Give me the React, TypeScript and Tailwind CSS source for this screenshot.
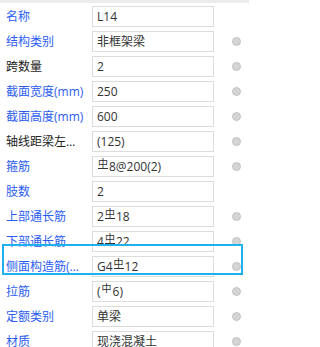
const rows: { label: string; value: React.ReactNode; blue: boolean; dot: boolean }[] = [];

function Grade3() {
  // HRB400 rebar grade mark
  return (
    <span className="inline-block align-text-top text-[10px] leading-[10px] border-b border-[#333] mx-[1px]">
      中
    </span>
  );
}

function Grade1() {
  // HPB300 rebar grade mark
  return <span className="inline-block align-text-top text-[10px] leading-[10px] mx-[1px]">中</span>;
}

rows.push(
  { label: "名称", value: "L14", blue: true, dot: false },
  { label: "结构类别", value: "非框架梁", blue: true, dot: true },
  { label: "跨数量", value: "2", blue: false, dot: true },
  { label: "截面宽度(mm)", value: "250", blue: true, dot: true },
  { label: "截面高度(mm)", value: "600", blue: true, dot: true },
  { label: "轴线距梁左边线距离(mm)", value: "(125)", blue: false, dot: true },
  {
    label: "箍筋",
    value: (
      <>
        <Grade3 />8@200(2)
      </>
    ),
    blue: true,
    dot: true,
  },
  { label: "肢数", value: "2", blue: true, dot: false },
  {
    label: "上部通长筋",
    value: (
      <>
        2<Grade3 />18
      </>
    ),
    blue: true,
    dot: true,
  },
  {
    label: "下部通长筋",
    value: (
      <>
        4<Grade3 />22
      </>
    ),
    blue: true,
    dot: true,
  },
  {
    label: "侧面构造筋(总配筋值)",
    value: (
      <>
        G4<Grade3 />12
      </>
    ),
    blue: true,
    dot: true,
  },
  {
    label: "拉筋",
    value: (
      <>
        (<Grade1 />6)
      </>
    ),
    blue: true,
    dot: true,
  },
  { label: "定额类别", value: "单梁", blue: true, dot: true },
  { label: "材质", value: "现浇混凝土", blue: true, dot: true }
);

export default function App() {
  return (
    <div
      className="relative w-[249px] h-[347px] overflow-hidden bg-white text-[12px]"
      style={{ fontFamily: '"Open Sans", "Noto Sans CJK SC", sans-serif' }}
    >
      <div className="h-[3px] bg-[#ececec]" />

      <div className="flex flex-col gap-[4px] pt-[3px]">
        {rows.map((r) => (
          <div key={r.label} className="flex items-center h-[21px]">
            <div
              className={`w-[92px] shrink-0 pl-[6px] pr-[6px] truncate ${
                r.blue ? "text-[#2b5cf2]" : "text-[#222]"
              }`}
            >
              {r.label}
            </div>
            <div className="w-[122px] h-[21px] shrink-0 border border-[#dcdcdc] bg-white px-[4px] flex items-center text-[#333] whitespace-nowrap overflow-hidden">
              <span>{r.value}</span>
            </div>
            <span
              className={`ml-[18px] w-[9px] h-[9px] rounded-full bg-[#d4d4d4] border border-[#c2c2c2] ${
                r.dot ? "" : "invisible"
              }`}
            />
          </div>
        ))}
      </div>

      {/* selected row highlight */}
      <div className="absolute left-[2px] top-[244px] w-[241px] h-[31px] border-2 border-[#1fb0ee] pointer-events-none" />
    </div>
  );
}
